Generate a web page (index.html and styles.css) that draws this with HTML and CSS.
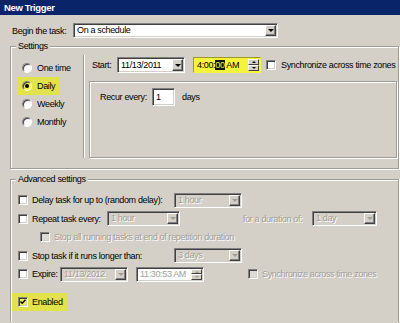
FILE: index.html
```html
<!DOCTYPE html>
<html lang="en">
  <head>
    <meta charset="UTF-8" />
    <meta name="viewport" content="width=device-width, initial-scale=1.0" />
    <title>New Trigger</title>
    <link rel="stylesheet" href="styles.css">
  </head>
  <body>
    <div class="titlebar">New Trigger</div>

    <div class="begin-row">
      <span class="begin-row__label">Begin the task:</span>
      <div class="combo combo--task">
        <span class="combo__text">On a schedule</span>
        <span class="combo__button"><i class="arrow"></i></span>
      </div>
    </div>

    <fieldset class="group group--settings">
      <legend class="group__title">Settings</legend>
      <div class="settings">
        <div class="radios">
          <div class="radio-row"><span class="radio"></span>One time</div>
          <div class="radio-row marked"><span class="radio radio--checked"></span>Daily</div>
          <div class="radio-row"><span class="radio"></span>Weekly</div>
          <div class="radio-row"><span class="radio"></span>Monthly</div>
        </div>
        <div class="schedule">
          <div class="start-row">
            <span class="start-row__label">Start:</span>
            <div class="combo combo--date">
              <span class="combo__text">11/13/2011</span>
              <span class="combo__button"><i class="arrow"></i></span>
            </div>
            <div class="spin-field spin-field--time">
              <span class="spin-field__text">4:00:<span class="selected">00</span> AM</span>
              <span class="spinner">
                <span class="spinner__btn"><i class="arrow arrow--up"></i></span>
                <span class="spinner__btn"><i class="arrow"></i></span>
              </span>
            </div>
            <span class="check check--sync"></span>
            <span class="check-label">Synchronize across time zones</span>
          </div>
          <div class="recur-box">
            <div class="recur-row">
              <span class="recur-row__label">Recur every:</span>
              <div class="textbox">1</div>
              <span class="recur-row__unit">days</span>
            </div>
          </div>
        </div>
      </div>
    </fieldset>

    <fieldset class="group group--advanced">
      <legend class="group__title">Advanced settings</legend>
      <div class="adv-rows">
        <div class="adv-row">
          <span class="check"></span>
          <span class="adv-label adv-label--long">Delay task for up to (random delay):</span>
          <div class="combo combo--small disabled">
            <span class="combo__text">1 hour</span>
            <span class="combo__button"><i class="arrow"></i></span>
          </div>
        </div>
        <div class="adv-row">
          <span class="check"></span>
          <span class="adv-label adv-label--repeat">Repeat task every:</span>
          <div class="combo combo--repeat disabled">
            <span class="combo__text">1 hour</span>
            <span class="combo__button"><i class="arrow"></i></span>
          </div>
          <span class="adv-label adv-label--duration dim">for a duration of:</span>
          <div class="combo combo--duration disabled">
            <span class="combo__text">1 day</span>
            <span class="combo__button"><i class="arrow"></i></span>
          </div>
        </div>
        <div class="adv-row adv-row--sub">
          <span class="check check--off"></span>
          <span class="adv-label dim">Stop all running tasks at end of repetition duration</span>
        </div>
        <div class="adv-row">
          <span class="check"></span>
          <span class="adv-label adv-label--long">Stop task if it runs longer than:</span>
          <div class="combo combo--small disabled">
            <span class="combo__text">3 days</span>
            <span class="combo__button"><i class="arrow"></i></span>
          </div>
        </div>
        <div class="adv-row">
          <span class="check"></span>
          <span class="adv-label adv-label--expire">Expire:</span>
          <div class="combo combo--small disabled">
            <span class="combo__text">11/13/2012</span>
            <span class="combo__button"><i class="arrow"></i></span>
          </div>
          <div class="spin-field spin-field--expire disabled">
            <span class="spin-field__text">11:30:53 AM</span>
            <span class="spinner">
              <span class="spinner__btn"><i class="arrow arrow--up"></i></span>
              <span class="spinner__btn"><i class="arrow"></i></span>
            </span>
          </div>
          <span class="check check--off check--expire-sync"></span>
          <span class="adv-label dim">Synchronize across time zones</span>
        </div>
        <div class="adv-row adv-row--enabled marked">
          <span class="check">
            <svg width="6" height="6" viewBox="0 0 6 6"><polyline points="0.5,2.5 2.2,4.3 5.5,0.8" fill="none" stroke="#000" stroke-width="1.4"/></svg>
          </span>
          <span class="adv-label">Enabled</span>
        </div>
      </div>
    </fieldset>
  </body>
</html>
```

FILE: styles.css
```css
html {
  background-color: #d4d0c8;
}
body {
  margin: 0;
  width: 400px;
  height: 323px;
  overflow: hidden;
  background-color: #d4d0c8;
  color: #000;
  font-family: "Liberation Sans", Arial, sans-serif;
  font-size: 9px;
  letter-spacing: -0.35px;
  line-height: 12px;
  white-space: nowrap;
}
.titlebar {
  height: 15px;
  padding-left: 4px;
  background-color: #0a246a;
  color: #fff;
  font-weight: bold;
  font-size: 9.5px;
  line-height: 15px;
}
.begin-row {
  display: flex;
  align-items: center;
  height: 15px;
  margin-top: 8px;
  padding-left: 12px;
}
.begin-row__label {
  width: 61px;
}
.combo {
  display: flex;
  align-items: stretch;
  box-sizing: border-box;
  height: 15px;
  padding: 1px;
  border: 1px solid;
  border-color: #808080 #fff #fff #808080;
  box-shadow: inset 1px 1px 0 #404040, inset -1px -1px 0 #d4d0c8;
  background-color: #fff;
  flex: none;
}
.combo--task {
  width: 205px;
}
.combo--date {
  width: 68px;
  height: 16px;
}
.combo--small {
  width: 68px;
}
.combo--repeat {
  width: 73px;
}
.combo--duration {
  width: 65px;
}
.combo__text {
  flex: 1;
  padding-left: 2px;
  line-height: 11px;
  overflow: hidden;
}
.combo--date .combo__text {
  line-height: 12px;
}
.combo__button {
  display: flex;
  align-items: center;
  justify-content: center;
  box-sizing: border-box;
  width: 11px;
  border: 1px solid;
  border-color: #fff #404040 #404040 #fff;
  box-shadow: inset -1px -1px 0 #808080;
  background-color: #d4d0c8;
}
.arrow {
  display: block;
  width: 0;
  height: 0;
  border-left: 3px solid transparent;
  border-right: 3px solid transparent;
  border-top: 3px solid #000;
}
.arrow--up {
  border-top: 0;
  border-bottom: 3px solid #000;
}
.disabled {
  background-color: #d4d0c8;
  color: #a19e98;
  text-shadow: 1px 1px 0 #fff;
}
.disabled .arrow {
  border-top-color: #a19e98;
}
.disabled .arrow--up {
  border-bottom-color: #a19e98;
}
.dim {
  color: #a19e98;
  text-shadow: 1px 1px 0 #fff;
}

/* group boxes */
.group {
  box-sizing: border-box;
  width: 389px;
  min-width: 0;
  margin: 2px 0 0 10px;
  padding: 0 0 0 1px;
  border: 1px solid #a09d97;
  box-shadow: inset 1px 1px 0 #fff, 1px 1px 0 #fff;
}
.group__title {
  margin-left: 4px;
  padding: 0 2px;
  background-color: #d4d0c8;
  line-height: 12px;
}
.settings {
  display: flex;
  padding: 3px 0 10px;
}
.radios {
  width: 71px;
  padding-top: 4px;
}
.radio-row {
  display: flex;
  align-items: center;
  gap: 5px;
  width: max-content;
  height: 18px;
  margin-left: 5px;
  padding: 0 5px;
}
.radio {
  position: relative;
  box-sizing: border-box;
  width: 10px;
  height: 10px;
  border: 1px solid;
  border-color: #808080 #fff #fff #808080;
  border-radius: 50%;
  box-shadow: inset 1px 1px 0 #404040;
  background-color: #fff;
}
.radio--checked::after {
  content: "";
  position: absolute;
  left: 2px;
  top: 2px;
  width: 4px;
  height: 4px;
  border-radius: 50%;
  background-color: #000;
}
.marked {
  background-color: #e2e24a;
}
.marked .radio,
.marked .check {
  background-color: #f0f046;
}
.schedule {
  flex: 1;
  padding: 2px 1px 0 5px;
  border-left: 1px solid #a09d97;
  box-shadow: inset 1px 0 0 #fff;
}
.start-row {
  display: flex;
  align-items: center;
  height: 16px;
  padding-left: 3px;
}
.start-row__label {
  width: 25px;
}
.spin-field {
  display: flex;
  box-sizing: border-box;
  width: 68px;
  height: 16px;
  margin-left: 8px;
  padding: 1px;
  border: 1px solid;
  border-color: #808080 #fff #fff #808080;
  box-shadow: inset 1px 1px 0 #404040, inset -1px -1px 0 #d4d0c8;
  background-color: #fff;
  flex: none;
}
.spin-field--time {
  border-color: #9a9a2a #f4f43c #f4f43c #9a9a2a;
  box-shadow: none;
  background-color: #f4f43c;
}
.spin-field--expire {
  height: 15px;
}
.spin-field__text {
  flex: 1;
  padding-left: 2px;
  line-height: 12px;
}
.spin-field--expire .spin-field__text {
  line-height: 11px;
}
.selected {
  background-color: #141408;
  color: #f4f43c;
}
.spinner {
  display: flex;
  flex-direction: column;
  width: 11px;
}
.spinner__btn {
  display: flex;
  flex: 1;
  align-items: center;
  justify-content: center;
  box-sizing: border-box;
  border: 1px solid;
  border-color: #fff #404040 #404040 #fff;
  background-color: #d4d0c8;
}
.spinner__btn .arrow {
  border-left-width: 2px;
  border-right-width: 2px;
  border-top-width: 2px;
}
.spinner__btn .arrow--up {
  border-top-width: 0;
  border-bottom-width: 2px;
}
.check {
  display: flex;
  align-items: center;
  justify-content: center;
  box-sizing: border-box;
  width: 10px;
  height: 10px;
  border: 1px solid;
  border-color: #808080 #fff #fff #808080;
  box-shadow: inset 1px 1px 0 #404040, inset -1px -1px 0 #d4d0c8;
  background-color: #fff;
  flex: none;
}
.check--off {
  background-color: #dedbd5;
}
.check--sync {
  margin-left: 5px;
}
.check-label {
  margin-left: 5px;
}
.recur-box {
  box-sizing: border-box;
  height: 77px;
  margin-top: 8px;
  padding: 6px 0 0 10px;
  border: 1px solid #a09d97;
  box-shadow: inset 1px 1px 0 #fff, 1px 1px 0 #fff;
}
.recur-row {
  display: flex;
  align-items: center;
}
.recur-row__label {
  width: 52px;
}
.textbox {
  box-sizing: border-box;
  width: 23px;
  height: 18px;
  padding: 2px 0 0 3px;
  border: 1px solid;
  border-color: #808080 #fff #fff #808080;
  box-shadow: inset 1px 1px 0 #404040, inset -1px -1px 0 #d4d0c8;
  background-color: #fff;
}
.recur-row__unit {
  margin-left: 7px;
}

/* advanced settings */
.group--advanced {
  margin-top: 4px;
  padding-bottom: 11px;
  border-bottom: 0;
  box-shadow: inset 1px 1px 0 #fff, 1px 0 0 #fff;
}
.adv-rows {
  padding-top: 6px;
}
.adv-row {
  display: flex;
  align-items: center;
  height: 18.5px;
  padding-left: 6px;
}
.adv-row--sub {
  padding-left: 28px;
}
.adv-label {
  margin-left: 4px;
  flex: none;
}
.adv-label--long {
  width: 142px;
}
.adv-label--repeat {
  width: 75px;
}
.adv-label--duration {
  width: 69px;
  margin-left: 63px;
}
.adv-label--expire {
  width: 28px;
}
.spin-field--expire {
  margin-left: 8px;
}
.check--expire-sync {
  margin-left: 44px;
}
.adv-row--enabled {
  width: max-content;
  height: 18px;
  margin-top: 9.5px;
  padding-right: 4px;
}
```
